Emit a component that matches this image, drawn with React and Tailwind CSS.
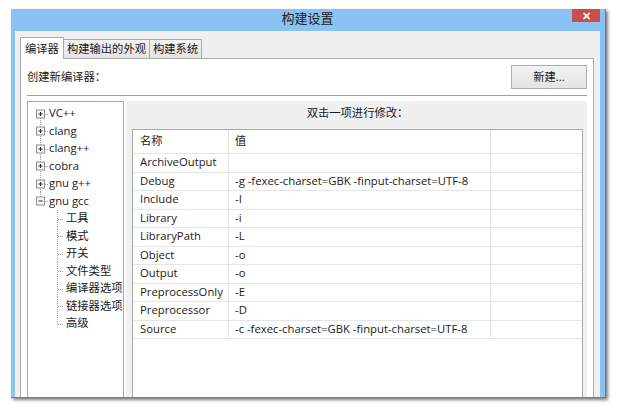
import React from 'react'

const TABS = [
  { label: '编译器', active: true },
  { label: '构建输出的外观' },
  { label: '构建系统' },
]

const COMPILERS = ['VC++', 'clang', 'clang++', 'cobra', 'gnu g++', 'gnu gcc']
const GCC_PAGES = ['工具', '模式', '开关', '文件类型', '编译器选项', '链接器选项', '高级']

const OPTIONS = [
  ['ArchiveOutput', ''],
  ['Debug', '-g -fexec-charset=GBK -finput-charset=UTF-8'],
  ['Include', '-I'],
  ['Library', '-i'],
  ['LibraryPath', '-L'],
  ['Object', '-o'],
  ['Output', '-o'],
  ['PreprocessOnly', '-E'],
  ['Preprocessor', '-D'],
  ['Source', '-c -fexec-charset=GBK -finput-charset=UTF-8'],
]

const dot = { stroke: '#a0a0a0', strokeWidth: 1, strokeDasharray: '1 1' }

function ExpandBox({ open }) {
  return (
    <g>
      <rect x="8.5" y="5" width="8" height="8" fill="#f4f4f4" stroke="#8f8f8f" />
      <line x1="10.5" y1="9" x2="14.5" y2="9" stroke="#2b2b2b" />
      {!open && <line x1="12.5" y1="7" x2="12.5" y2="11" stroke="#2b2b2b" />}
    </g>
  )
}

function RootRow({ label, first, last }) {
  return (
    <div className="flex items-center h-[17.5px]">
      <svg width="21" height="18" className="shrink-0">
        <line x1="12.5" y1={first ? 9 : 0} x2="12.5" y2={last ? 9 : 18} {...dot} />
        <line x1="17" y1="9.5" x2="21" y2="9.5" {...dot} />
        <ExpandBox open={last} />
      </svg>
      <span className="whitespace-nowrap">{label}</span>
    </div>
  )
}

function ChildRow({ label, last }) {
  return (
    <div className="flex items-center h-[17.5px]">
      <svg width="38" height="18" className="shrink-0">
        <line x1="29.5" y1="0" x2="29.5" y2={last ? 9 : 18} {...dot} />
        <line x1="30" y1="9.5" x2="36" y2="9.5" {...dot} />
      </svg>
      <span className="whitespace-nowrap">{label}</span>
    </div>
  )
}

export default function App() {
  return (
    <div
      className="w-[618px] h-[408px] bg-white pt-[9px] pl-[11px] overflow-hidden text-[11.3px] text-[#1a1a1a]"
      style={{ fontFamily: '"Open Sans", "Noto Sans CJK SC", sans-serif' }}
    >
      <div className="w-[595px] h-[389px] bg-[#8ac3f3] pl-[4px] pr-[5px] flex flex-col overflow-hidden border-r border-b border-[#5f7f9c] shadow-[2px_2px_3px_rgba(0,0,0,0.5)]">
        {/* title bar */}
        <div className="h-[22px] grid grid-cols-[1fr_auto_1fr] shrink-0">
          <div />
          <div className="text-[13px] leading-[19px] text-[#222]">构建设置</div>
          <div className="flex justify-end">
            <div className="w-[28px] h-[13px] bg-[#c9504a] flex items-center justify-center text-white text-[11px] font-bold leading-none">
              ✕
            </div>
          </div>
        </div>

        {/* client */}
        <div className="flex-1 bg-[#f0f0f0] pt-[5px] pl-[5px] pr-[6px] flex flex-col min-h-0">
          <div className="flex items-end h-[22px] shrink-0">
            {TABS.map((t) =>
              t.active ? (
                <div key={t.label} className="relative z-10 h-[22px] -mb-px px-[4px] bg-white border border-b-0 border-[#acacac] leading-[21px]">
                  {t.label}
                </div>
              ) : (
                <div key={t.label} className="h-[19px] px-[3px] bg-gradient-to-b from-[#f3f3f3] to-[#e3e3e3] border-t border-r border-[#acacac] leading-[18px]">
                  {t.label}
                </div>
              )
            )}
          </div>

          <div className="shrink-0 h-[380px] flex flex-col bg-white border border-[#acacac] px-[6px]">
            <div className="mt-[6px] h-[24px] flex items-center justify-between shrink-0">
              <span>创建新编译器：</span>
              <button className="w-[76px] h-[24px] border border-[#adadad] bg-gradient-to-b from-[#f2f2f2] to-[#e4e4e4] text-[#1a1a1a]">
                新建...
              </button>
            </div>
            <div className="mt-[6px] h-px bg-[#a0a0a0] shrink-0" />

            <div className="mt-[5px] flex gap-[2px] flex-1">
              {/* compiler tree */}
              <div className="w-[97px] shrink-0 border border-[#a8a8a8] bg-white pt-[3px]">
                {COMPILERS.map((c, i) => (
                  <RootRow key={c} label={c} first={i === 0} last={i === COMPILERS.length - 1} />
                ))}
                {GCC_PAGES.map((p, i) => (
                  <ChildRow key={p} label={p} last={i === GCC_PAGES.length - 1} />
                ))}
              </div>

              {/* options */}
              <div className="flex-1 bg-[#f0f0f0] pl-[6px] pr-[4px] flex flex-col">
                <div className="h-[24px] flex items-center justify-center shrink-0">双击一项进行修改：</div>
                <div className="mt-[4px] flex-1 bg-white border border-[#a8a8a8]">
                  <div className="grid grid-cols-[96px_262px_1fr]">
                    <div className="h-[24px] pl-[7px] flex items-center border-b border-r border-[#e3e3e3]">名称</div>
                    <div className="h-[24px] pl-[6px] flex items-center border-b border-r border-[#e3e3e3]">值</div>
                    <div className="h-[24px] border-b border-[#e3e3e3]" />
                    {OPTIONS.map(([name, val]) => (
                      <React.Fragment key={name}>
                        <div className="h-[18.5px] pl-[7px] flex items-center border-b border-r border-[#e6e6e6] whitespace-nowrap">{name}</div>
                        <div className="h-[18.5px] pl-[6px] flex items-center border-b border-r border-[#e6e6e6] whitespace-nowrap">{val}</div>
                        <div className="h-[18.5px] border-b border-[#e6e6e6]" />
                      </React.Fragment>
                    ))}
                  </div>
                </div>
              </div>
            </div>
          </div>
        </div>
      </div>
    </div>
  )
}
